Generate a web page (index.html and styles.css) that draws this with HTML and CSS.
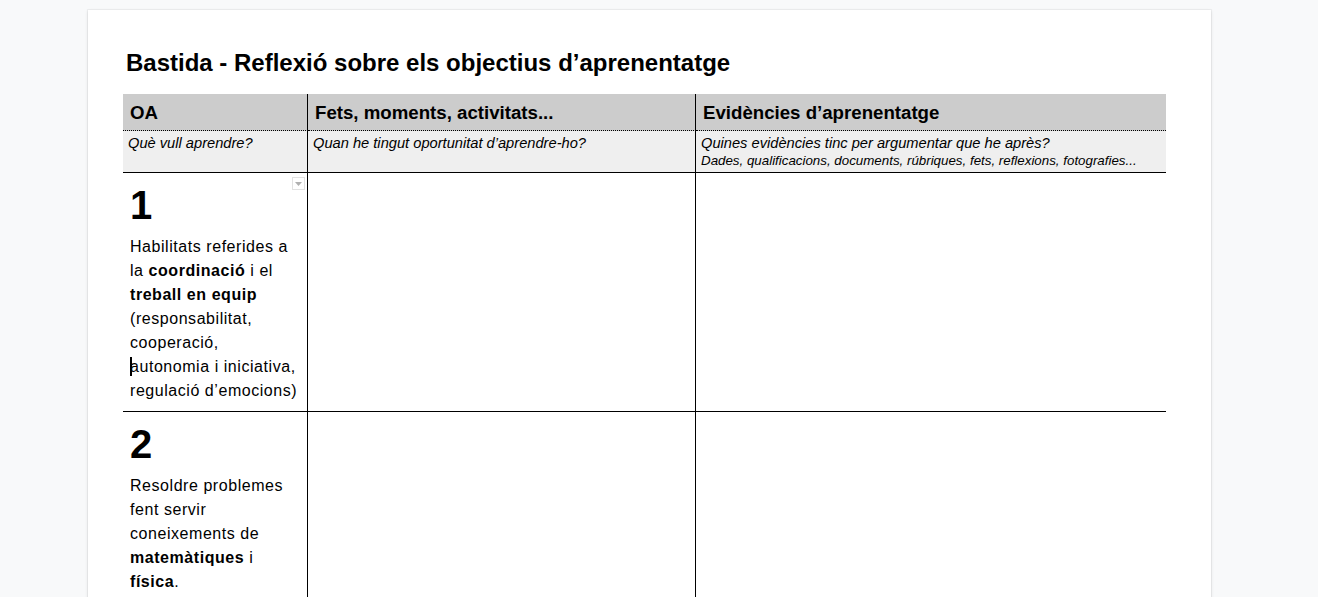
FILE: index.html
```html
<!DOCTYPE html>
<html lang="ca">
<head>
<meta charset="utf-8">
<title>Bastida - Reflexió sobre els objectius d’aprenentatge</title>
<link rel="stylesheet" href="styles.css">
</head>
<body>
<div class="doc">
  <h1 class="title">Bastida - Reflexió sobre els objectius d’aprenentatge</h1>
  <table class="grid">
    <colgroup>
      <col class="c1"><col class="c2"><col class="c3">
    </colgroup>
    <tr class="head">
      <th class="b">OA</th>
      <th class="b">Fets, moments, activitats...</th>
      <th>Evidències d’aprenentatge</th>
    </tr>
    <tr class="sub">
      <td class="b">Què vull aprendre?</td>
      <td class="b">Quan he tingut oportunitat d’aprendre-ho?</td>
      <td>Quines evidències tinc per argumentar que he après?<div class="small">Dades, qualificacions, documents, rúbriques, fets, reflexions, fotografies...</div></td>
    </tr>
    <tr class="row">
      <td class="b oa">
        <span class="dd"><svg width="7" height="4" viewBox="0 0 7 4"><path d="M0 0h7L3.5 4z" fill="#b0b0b0"/></svg></span>
        <div class="num">1</div>
        <p class="txt">Habilitats referides a la <b>coordinació</b> i el <b>treball en equip</b> (responsabilitat, cooperació, <span class="nw"><span class="caret"></span>autonomia</span> i iniciativa, regulació d’emocions)</p>
      </td>
      <td class="b"></td>
      <td></td>
    </tr>
    <tr class="row last">
      <td class="b oa">
        <div class="num">2</div>
        <p class="txt">Resoldre problemes fent servir coneixements de <b>matemàtiques</b> i <b>física</b>.</p>
      </td>
      <td class="b"></td>
      <td></td>
    </tr>
  </table>
</div>
</body>
</html>
```
FILE: styles.css
```css
html, body {
  margin: 0;
  padding: 0;
  background: #f8f9fa;
  font-family: "Liberation Sans", Arial, sans-serif;
  color: #000;
}
.doc {
  margin: 10px 0 0 88px;
  width: 1123px;
  min-height: 700px;
  background: #fff;
  box-shadow: 0 0 0 1px rgba(0,0,0,0.04), 0 1px 3px rgba(60,64,67,0.15);
  padding: 39px 0 0 35px;
  box-sizing: border-box;
}
.title {
  margin: 0 0 17px 3px;
  font-size: 24px;
  line-height: 28px;
  font-weight: bold;
}
.grid {
  border-collapse: separate;
  border-spacing: 0;
  table-layout: fixed;
  width: 1043px;
}
.c1 { width: 185px; }
.c2 { width: 388px; }
.c3 { width: 470px; }
.grid th, .grid td {
  padding: 0;
  vertical-align: top;
  text-align: left;
}
.b { border-right: 1px solid #000; }
.head th {
  background: #cccccc;
  font-size: 18.67px;
  line-height: 21px;
  font-weight: bold;
  padding: 8px 7px 7px 7px;
  border-bottom: 1px dotted #000;
}
.sub td {
  background: #efefef;
  font-size: 14.67px;
  line-height: 18px;
  font-style: italic;
  padding: 3px 5px 2px 5px;
  border-bottom: 1px solid #000;
}
.sub .small {
  font-size: 13.33px;
  line-height: 18px;
}
.row td {
  border-bottom: 1px solid #000;
}
.row.last td { border-bottom: none; height: 260px; }
.oa {
  position: relative;
  padding: 9px 7px 8px 7px !important;
}
.num {
  font-size: 40px;
  line-height: 46px;
  font-weight: bold;
  margin-bottom: 7px;
}
.txt {
  margin: 0;
  font-size: 16px;
  line-height: 24px;
  letter-spacing: 0.55px;
}
.nw { white-space: nowrap; }
.caret {
  display: inline-block;
  width: 0;
  height: 19px;
  border-left: 2px solid #000;
  margin-right: -2px;
  vertical-align: -4px;
}
.dd {
  position: absolute;
  top: 4px;
  right: 2px;
  width: 11px;
  height: 11px;
  border: 1px solid #e2e2e2;
  background: #fff;
  display: flex;
  align-items: center;
  justify-content: center;
}
```
